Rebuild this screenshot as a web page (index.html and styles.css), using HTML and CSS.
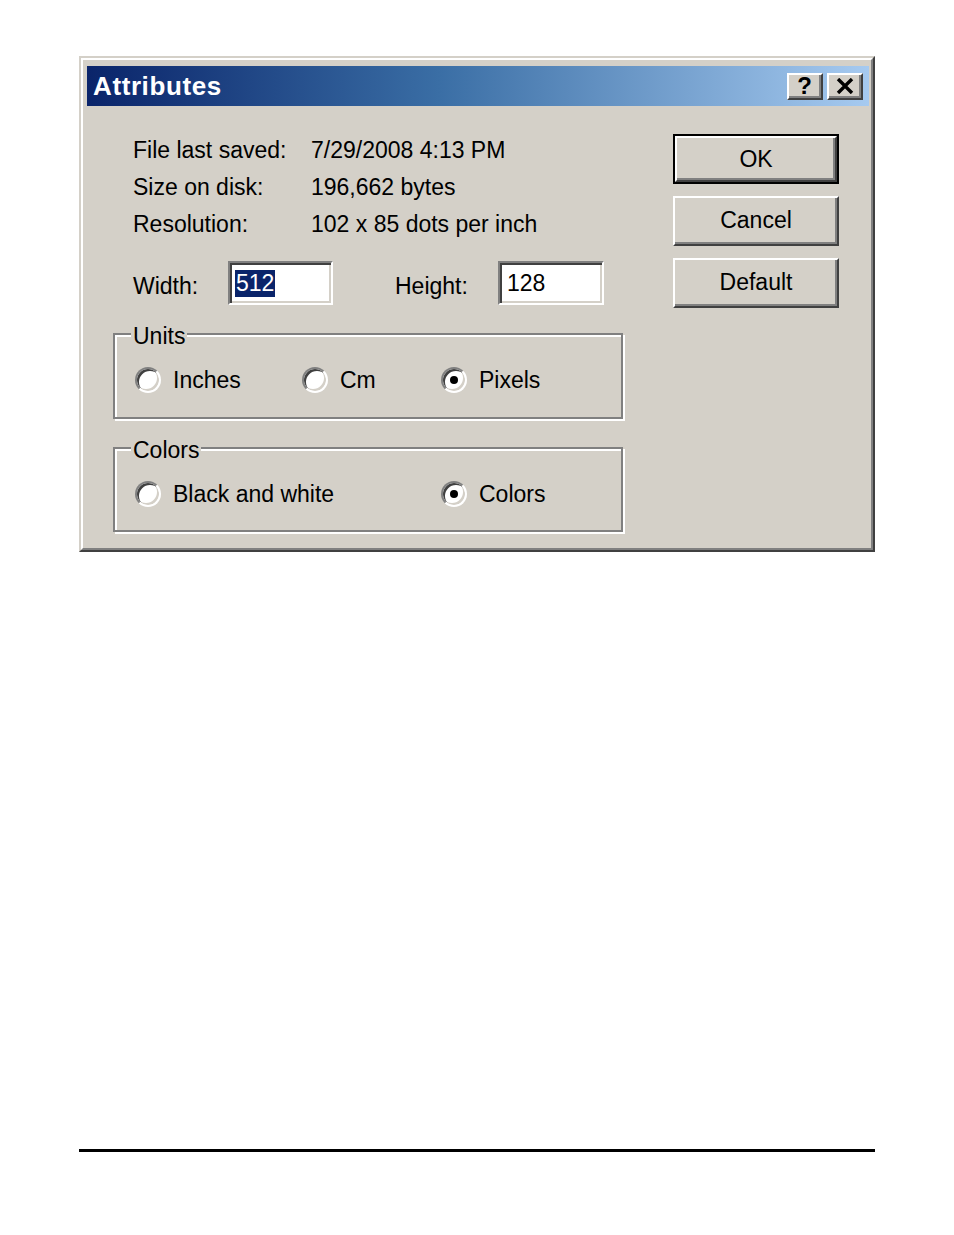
FILE: index.html
```html
<!DOCTYPE html>
<html>
<head>
<meta charset="utf-8">
<title>Attributes</title>
<link rel="stylesheet" href="styles.css">
</head>
<body>
<div class="page">
  <div class="window">
    <div class="frame">
      <div class="titlebar">
        <span class="title">Attributes</span>
        <div class="title-buttons">
          <div class="tbtn"><span class="qmark">?</span></div>
          <div class="tbtn">
            <svg width="18" height="16" viewBox="0 0 18 16"><path d="M2 1 L16 15 M16 1 L2 15" stroke="#000" stroke-width="3.4" fill="none"/></svg>
          </div>
        </div>
      </div>
      <div class="body">
        <div class="left">
          <div class="info">
            <div class="info-row"><span class="key">File last saved:</span><span class="val">7/29/2008 4:13 PM</span></div>
            <div class="info-row"><span class="key">Size on disk:</span><span class="val">196,662 bytes</span></div>
            <div class="info-row"><span class="key">Resolution:</span><span class="val">102 x 85 dots per inch</span></div>
          </div>
          <div class="size-row">
            <span class="size-label w-label">Width:</span>
            <div class="field w-field"><span class="sel">512</span></div>
            <span class="size-label h-label">Height:</span>
            <div class="field h-field"><span class="plain">128</span></div>
          </div>
          <div class="group units">
            <span class="group-label">Units</span>
            <div class="radios units-radios">
              <div class="opt"><span class="radio"></span><span>Inches</span></div>
              <div class="opt"><span class="radio"></span><span>Cm</span></div>
              <div class="opt"><span class="radio on"></span><span>Pixels</span></div>
            </div>
          </div>
          <div class="group colors">
            <span class="group-label">Colors</span>
            <div class="radios colors-radios">
              <div class="opt"><span class="radio"></span><span>Black and white</span></div>
              <div class="opt"><span class="radio on"></span><span>Colors</span></div>
            </div>
          </div>
        </div>
        <div class="buttons">
          <div class="btn default-btn"><div class="btn-in">OK</div></div>
          <div class="btn"><div class="btn-in">Cancel</div></div>
          <div class="btn"><div class="btn-in">Default</div></div>
        </div>
      </div>
    </div>
  </div>
  <div class="rule"></div>
</div>
</body>
</html>
```

FILE: styles.css
```css
html, body {
  margin: 0;
  padding: 0;
  background: #ffffff;
}

body {
  font-family: "Liberation Sans", Arial, sans-serif;
  font-size: 23px;
  color: #000;
}

.page {
  padding-top: 56px;
  padding-left: 79px;
}

.window {
  width: 796px;
  height: 496px;
  box-sizing: border-box;
  border: 2px solid;
  border-color: #d4d0c8 #404040 #404040 #d4d0c8;
  background: #d4d0c8;
}

.frame {
  height: 100%;
  box-sizing: border-box;
  border: 2px solid;
  border-color: #ffffff #808080 #808080 #ffffff;
  padding: 6px 2px 0 4px;
}

.titlebar {
  height: 40px;
  display: flex;
  align-items: center;
  justify-content: space-between;
  background: linear-gradient(to right, #0a246a 0%, #3a6ea5 45%, #a6caf0 100%);
  padding: 0 6px 0 6px;
}

.title {
  font-weight: bold;
  font-size: 26px;
  line-height: 40px;
  color: #fff;
  letter-spacing: 0.6px;
}

.title-buttons {
  display: flex;
  gap: 4px;
}

.tbtn {
  width: 36px;
  height: 27px;
  box-sizing: border-box;
  background: #d4d0c8;
  border: 2px solid;
  border-color: #ffffff #404040 #404040 #ffffff;
  box-shadow: inset -2px -2px 0 #808080;
  display: flex;
  align-items: center;
  justify-content: center;
}

.qmark {
  font-weight: bold;
  font-size: 24px;
  line-height: 22px;
  margin-left: -1px;
}

.body {
  display: flex;
  padding-top: 26px;
  padding-left: 26px;
  gap: 50px;
}

.left {
  width: 510px;
}

.info {
  padding-left: 20px;
}

.info-row {
  display: flex;
  line-height: 37px;
  height: 37px;
}

.key {
  width: 178px;
}

.size-row {
  display: flex;
  align-items: flex-start;
  margin-top: 18px;
  padding-left: 20px;
}

.size-label {
  line-height: 28px;
  margin-top: 11px;
}

.w-label { width: 95px; }
.h-label { width: 103px; margin-left: 62px; }

.field {
  height: 44px;
  box-sizing: border-box;
  background: #fff;
  border: 2px solid;
  border-color: #808080 #ffffff #ffffff #808080;
  box-shadow: inset 2px 2px 0 #404040, inset -2px -2px 0 #d4d0c8;
  display: flex;
  align-items: center;
  padding-left: 5px;
}

.w-field { width: 105px; }
.h-field { width: 106px; padding-left: 7px; }

.sel {
  background: #0a246a;
  color: #fff;
  line-height: 27px;
  padding: 0 1px;
}

.plain {
  line-height: 27px;
}

.group {
  position: relative;
  box-sizing: border-box;
  border: 2px solid #808080;
  box-shadow: inset 2px 2px 0 #ffffff, 2px 2px 0 #ffffff;
  padding: 30px 0 22px 20px;
}

.units {
  margin-top: 28px;
  height: 86px;
}

.colors {
  margin-top: 28px;
  height: 85px;
  padding-top: 30px;
  padding-bottom: 20px;
}

.group-label {
  position: absolute;
  top: -13px;
  left: 16px;
  line-height: 28px;
  padding: 0 2px;
  background: #d4d0c8;
}

.radios {
  display: grid;
  height: 30px;
  align-items: center;
}

.units-radios {
  grid-template-columns: 167px 139px auto;
}

.colors-radios {
  grid-template-columns: 306px auto;
}

.opt {
  display: flex;
  align-items: center;
  gap: 12px;
}

.radio {
  width: 26px;
  height: 26px;
  box-sizing: border-box;
  border-radius: 50%;
  border: 2px solid;
  border-color: #808080 #ffffff #ffffff #808080;
  background: #fff;
  box-shadow: inset 2px 2px 0 #404040, inset -2px -2px 0 #d4d0c8;
  display: flex;
  align-items: center;
  justify-content: center;
}

.radio.on::after {
  content: "";
  width: 8px;
  height: 8px;
  border-radius: 50%;
  background: #000;
}

.buttons {
  display: flex;
  flex-direction: column;
  gap: 12px;
  margin-top: 2px;
}

.btn {
  width: 166px;
  height: 50px;
  box-sizing: border-box;
  border: 2px solid;
  border-color: #ffffff #404040 #404040 #ffffff;
  box-shadow: inset -2px -2px 0 #808080;
  background: #d4d0c8;
}

.btn-in {
  height: 100%;
  display: flex;
  align-items: center;
  justify-content: center;
  padding-bottom: 2px;
  box-sizing: border-box;
}

.default-btn {
  border: 2px solid #000;
  box-shadow: none;
}

.default-btn .btn-in {
  border: 2px solid;
  border-color: #ffffff #404040 #404040 #ffffff;
  box-shadow: inset -2px -2px 0 #808080;
  padding-bottom: 0;
}

.rule {
  width: 796px;
  height: 3px;
  background: #000;
  margin-top: 597px;
}
```
